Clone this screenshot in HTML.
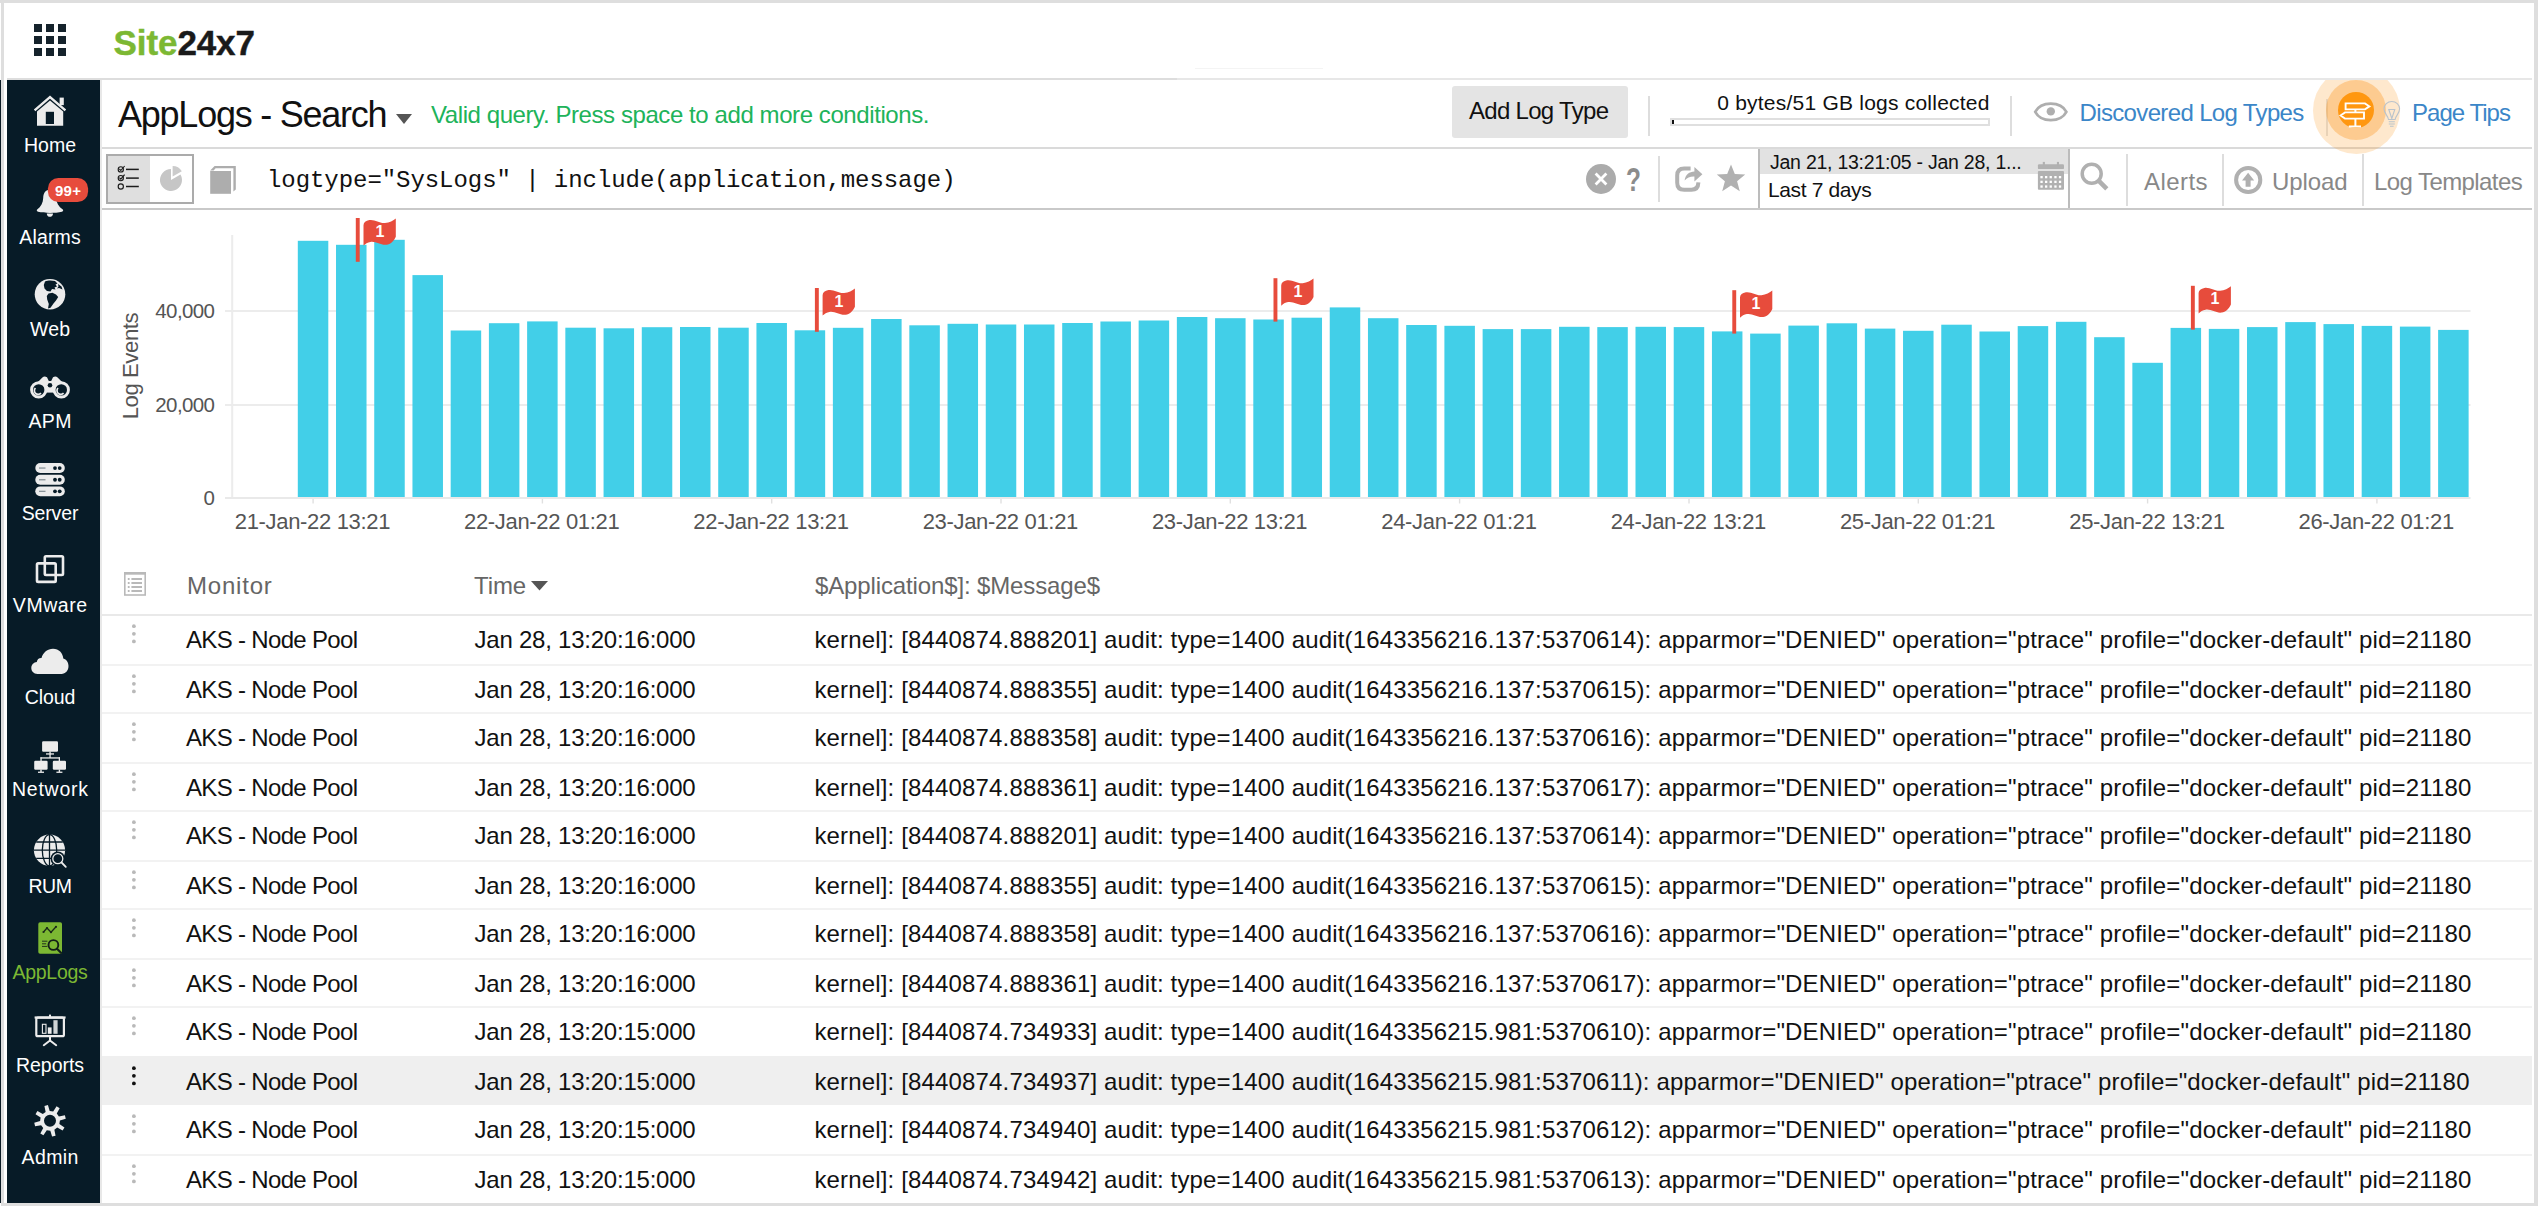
<!DOCTYPE html>
<html lang="en"><head><meta charset="utf-8"><title>AppLogs - Search</title>
<style>
*{box-sizing:border-box;margin:0;padding:0}
html,body{width:2538px;height:1210px;overflow:hidden;background:#fff}
body{position:relative;font-family:"Liberation Sans",sans-serif;color:#111}
.a{position:absolute}
.t{position:absolute;white-space:pre;line-height:1}
.sb{position:absolute;left:7px;top:80px;width:93px;height:1123px;background:#071b27}
.sl{position:absolute;left:0;width:86px;text-align:center;color:#fff;font-size:19.5px;line-height:1;white-space:pre}
.row{position:absolute;left:102px;width:2430px;height:49px}
.c{position:absolute;white-space:pre;line-height:1;font-size:24px;color:#111}
.vsep{position:absolute;width:2px;background:#ddd}
.xl{position:absolute;white-space:pre;line-height:1;font-size:22px;letter-spacing:-0.33px;color:#555;width:240px;text-align:center;top:511px}
.yl{position:absolute;white-space:pre;line-height:1;font-size:20.5px;color:#555;width:100px;text-align:right;left:114.4px}
</style></head>
<body>
<div class="a" style="left:0;top:0;width:2538px;height:3px;background:#dedede"></div>
<div class="a" style="left:1px;top:0;width:3px;height:1206px;background:#dedede"></div>
<div class="a" style="left:2534px;top:0;width:4px;height:1206px;background:#dedede"></div>
<div class="a" style="left:1px;top:1203px;width:2537px;height:3px;background:#dedede"></div>
<div class="a" style="left:0;top:80px;width:1px;height:1123px;background:#0d1c26"></div>
<div class="a" style="left:7px;top:78px;width:2525px;height:2px;background:#e7e7e7"></div><div class="a" style="left:7px;top:78px;width:1170px;height:2px;background:#dddddd"></div><div class="a" style="left:1195px;top:68px;width:128px;height:1px;background:#f4f4f4"></div>
<svg class="a" style="left:34px;top:24px" width="32" height="32" viewBox="0 0 32 32" fill="#16232c"><rect x="0" y="0" width="8" height="8"/><rect x="12" y="0" width="8" height="8"/><rect x="24" y="0" width="8" height="8"/><rect x="0" y="12" width="8" height="8"/><rect x="12" y="12" width="8" height="8"/><rect x="24" y="12" width="8" height="8"/><rect x="0" y="24" width="8" height="8"/><rect x="12" y="24" width="8" height="8"/><rect x="24" y="24" width="8" height="8"/></svg>
<div class="t" style="left:113.6px;top:25.2px;font-size:35px;font-weight:700;letter-spacing:-0.1px;color:#1a1a1a;-webkit-text-stroke:0.45px"><span style="color:#7cb833">Site</span>24x7</div>
<div class="sb">
<svg class="a" style="left:0;top:0" width="93" height="1123" viewBox="7 80 93 1123">
<g><path d="M34.6 110.4 L50 97 L65.4 110.4" fill="none" stroke="#ececec" stroke-width="2.4" stroke-linejoin="miter"/><rect x="59.6" y="97.6" width="4.2" height="7.5" fill="#ececec"/><path d="M37 111.6 L50 100.6 L63.2 111.6 V125.8 H37Z" fill="#ececec"/><rect x="45.8" y="111.8" width="8.2" height="12.2" fill="#071b27"/></g>
<g fill="#ececec"><path d="M49.6 189.8 C45 189.8 43.4 193.5 43.2 198 C43 203 41 206.5 37.2 209.6 C36.4 210.4 36.8 211.4 38 211.7 C45 213.3 55 213.3 62 211.7 C63.2 211.4 63.5 210.4 62.8 209.6 C58.6 206.5 56.4 203 56.2 198 C56 193.5 54.4 189.8 49.6 189.8Z"/><path d="M46.8 213.4 H53 C53 217.9 46.8 217.9 46.8 213.4Z"/></g>
<rect x="47.9" y="177.9" width="40.2" height="24.2" rx="10.5" fill="#e74c3c"/>
<g><circle cx="50" cy="294.2" r="15.3" fill="#ececec"/><path d="M45 281.5 C48 280 52 280.2 55 281 L57.5 283.5 L55.5 284.5 L57 286.5 L54.5 287.5 L55.5 289.5 L52 289 L50.5 291.5 L47 291 L44.5 288.5 L43.8 285 Z" fill="#071b27"/><path d="M58 284 L61.5 286.5 L62.5 289.5 L59 288 L57 288.5 L58.5 286.5Z" fill="#071b27"/><path d="M48.5 293.5 L52.5 292.8 L56 294.5 L58.2 297 L56 300.5 L53.5 303.5 L50.5 307.8 L48 308.6 L48.8 304 L47.2 299.5 L46.8 296Z" fill="#071b27"/></g>
<g><path d="M42.4 377.4 Q44.4 375.6 47 377.2 L48.8 381 H51.2 L53 377.2 Q55.6 375.6 57.6 377.4 L66.5 386.5 H33.5Z" fill="#ececec"/><circle cx="38.7" cy="389.9" r="8.6" fill="#ececec"/><circle cx="61.3" cy="389.9" r="8.6" fill="#ececec"/><rect x="45.5" y="383" width="9" height="9.6" fill="#ececec"/><circle cx="38.7" cy="389.9" r="5.7" fill="#071b27"/><circle cx="61.3" cy="389.9" r="5.7" fill="#071b27"/><circle cx="50" cy="385.2" r="2.3" fill="#071b27"/><path d="M35.4 388 A3.8 3.8 0 0 0 41 393.2" fill="none" stroke="#ececec" stroke-width="1.7"/><path d="M58 388 A3.8 3.8 0 0 0 63.6 393.2" fill="none" stroke="#ececec" stroke-width="1.7"/></g>
<rect x="35.3" y="463.1" width="29.5" height="9.9" rx="4.95" fill="#ececec"/><rect x="39" y="467.4" width="6.5" height="1.3" fill="#8a949a"/><circle cx="55" cy="468.05" r="1.9" fill="#071b27"/><circle cx="59.7" cy="468.05" r="1.9" fill="#071b27"/><rect x="35.3" y="474.8" width="29.5" height="9.9" rx="4.95" fill="#ececec"/><rect x="39" y="479.1" width="6.5" height="1.3" fill="#8a949a"/><circle cx="55" cy="479.75" r="1.9" fill="#071b27"/><circle cx="59.7" cy="479.75" r="1.9" fill="#071b27"/><rect x="35.3" y="486.4" width="29.5" height="9.9" rx="4.95" fill="#ececec"/><rect x="39" y="490.7" width="6.5" height="1.3" fill="#8a949a"/><circle cx="55" cy="491.35" r="1.9" fill="#071b27"/><circle cx="59.7" cy="491.35" r="1.9" fill="#071b27"/>
<g fill="none" stroke="#ececec" stroke-width="2.6"><rect x="44.8" y="556.2" width="18.2" height="18.8" rx="1.2"/><rect x="37" y="563.4" width="18.7" height="18.5" rx="1.2"/></g>
<path d="M37.5 673.9 C33.5 673.9 31.3 671 31.3 668 C31.3 664.6 33.8 662.3 36.8 662 C37 659.5 39 657.8 41.5 658 C43 652.5 47.5 648.7 53 648.7 C59 648.7 62.8 653 63.3 658.5 C66.5 659.3 68.5 662.3 68.5 666 C68.5 670.5 65.5 673.9 61.5 673.9Z" fill="#ececec"/>
<g fill="#ececec"><rect x="42.1" y="741.3" width="15.9" height="10.4" rx="1.2"/><rect x="34.2" y="760.7" width="13.4" height="9" rx="1.2"/><rect x="52.8" y="760.7" width="13.2" height="9" rx="1.2"/><rect x="46" y="753.3" width="8" height="1.3"/><rect x="49.4" y="751.5" width="1.3" height="6.5"/><rect x="40.4" y="757.3" width="19.6" height="1.3"/><rect x="40.4" y="757.3" width="1.3" height="4"/><rect x="58.7" y="757.3" width="1.3" height="4"/><rect x="40.3" y="769.5" width="1.4" height="2.5"/><rect x="38" y="771.6" width="6" height="1.3"/><rect x="58.7" y="769.5" width="1.4" height="2.5"/><rect x="56.4" y="771.6" width="6" height="1.3"/></g>
<g><circle cx="49.5" cy="850.2" r="15.6" fill="#ececec"/><g fill="none" stroke="#071b27" stroke-width="1.3"><ellipse cx="49.5" cy="850.2" rx="7.2" ry="15.6"/><path d="M49.5 834.6 V865.8 M33.9 850.2 H65.1 M36.2 842 H62.8 M36.2 858.4 H62.8"/></g><circle cx="57.8" cy="858.7" r="7.2" fill="#071b27"/><circle cx="57.8" cy="858.7" r="5" fill="#071b27" stroke="#ececec" stroke-width="1.3"/><path d="M61.6 862.5 L65.8 866.8" stroke="#ececec" stroke-width="1.8" stroke-linecap="round"/></g>
<g><rect x="38.3" y="922.3" width="23.7" height="31.4" rx="1.8" fill="#7cb833"/><path d="M43.5 932 L47 928 L51 932.2 L56 926.8" fill="none" stroke="#1b2a1a" stroke-width="1.3"/><circle cx="43.5" cy="932.0" r="1.1" fill="#1b2a1a"/><circle cx="47.0" cy="928.0" r="1.1" fill="#1b2a1a"/><circle cx="51.0" cy="932.2" r="1.1" fill="#1b2a1a"/><circle cx="56.0" cy="926.8" r="1.1" fill="#1b2a1a"/><path d="M42 941.2 H47.4 M42 943.8 H46.2 M42 946.4 H47.4" stroke="#22331c" stroke-width="1"/><circle cx="53.4" cy="945" r="4.9" fill="none" stroke="#132018" stroke-width="1.9"/><path d="M57 948.8 L61 952.8" stroke="#132018" stroke-width="2.2" stroke-linecap="round"/></g>
<g><rect x="36.3" y="1017.6" width="27.6" height="18.6" rx="1.5" fill="none" stroke="#ececec" stroke-width="2.2"/><rect x="34.6" y="1016.4" width="31" height="2.2" fill="#ececec"/><rect x="49" y="1014.6" width="2" height="2.4" fill="#ececec"/><rect x="42.4" y="1024.3" width="3.6" height="9" fill="none" stroke="#ececec" stroke-width="1.1"/><rect x="47.8" y="1027.4" width="3.8" height="6.4" fill="#ececec"/><rect x="53.4" y="1020.2" width="4.2" height="13.6" fill="#cfd4d6"/><path d="M50 1037 V1041 M50 1040.5 L43.8 1045.2 M50 1040.5 L56.2 1045.2" stroke="#ececec" stroke-width="2" fill="none" stroke-linecap="round"/></g>
<path d="M45.64 1111.91 L44.43 1105.91 L47.93 1105.04 L49.68 1110.91 L53.20 1111.43 L56.59 1106.33 L59.68 1108.19 L56.77 1113.58 L58.89 1116.44 L64.89 1115.23 L65.76 1118.73 L59.89 1120.48 L59.37 1124.00 L64.47 1127.39 L62.61 1130.48 L57.22 1127.57 L54.36 1129.69 L55.57 1135.69 L52.07 1136.56 L50.32 1130.69 L46.80 1130.17 L43.41 1135.27 L40.32 1133.41 L43.23 1128.02 L41.11 1125.16 L35.11 1126.37 L34.24 1122.87 L40.11 1121.12 L40.63 1117.60 L35.53 1114.21 L37.39 1111.12 L42.78 1114.03Z M44.00 1120.80 a6.00 6.00 0 1 0 12.00 0 a6.00 6.00 0 1 0 -12.00 0Z" fill="#ececec" fill-rule="evenodd"/>
</svg>
<div class="t" style="left:41px;top:102.5px;width:40.2px;text-align:center;color:#fff;font-size:15px;font-weight:700;letter-spacing:0.2px">99+</div>
<div class="sl" style="top:56.0px;letter-spacing:-0.03px;color:#fff;padding-left:0.00px">Home</div>
<div class="sl" style="top:147.7px;letter-spacing:0.17px;color:#fff;padding-left:0.17px">Alarms</div>
<div class="sl" style="top:239.6px;letter-spacing:0.12px;color:#fff;padding-left:0.12px">Web</div>
<div class="sl" style="top:331.8px;letter-spacing:0.48px;color:#fff;padding-left:0.48px">APM</div>
<div class="sl" style="top:423.6px;letter-spacing:-0.16px;color:#fff;padding-left:0.00px">Server</div>
<div class="sl" style="top:515.9px;letter-spacing:0.55px;color:#fff;padding-left:0.55px">VMware</div>
<div class="sl" style="top:607.7px;letter-spacing:-0.07px;color:#fff;padding-left:0.00px">Cloud</div>
<div class="sl" style="top:699.6px;letter-spacing:0.74px;color:#fff;padding-left:0.74px">Network</div>
<div class="sl" style="top:797.3px;letter-spacing:-0.47px;color:#fff;padding-left:0.00px">RUM</div>
<div class="sl" style="top:883.3px;letter-spacing:-0.30px;color:#7cb833;padding-left:0.00px">AppLogs</div>
<div class="sl" style="top:975.7px;letter-spacing:-0.04px;color:#fff;padding-left:0.00px">Reports</div>
<div class="sl" style="top:1067.5px;letter-spacing:0.38px;color:#fff;padding-left:0.38px">Admin</div>
</div>
<div class="a" style="left:100px;top:80px;width:2px;height:1123px;background:#e8e8e8"></div>
<div class="a" style="left:102px;top:147px;width:2430px;height:2px;background:#dadada"></div>
<div class="t" style="left:118.0px;top:97.4px;font-size:36px;color:#111;letter-spacing:-1.237px;">AppLogs - Search</div>
<svg class="a" style="left:396px;top:114px" width="16" height="10" viewBox="0 0 16 10"><path d="M0 0H16L8 10Z" fill="#555"/></svg>
<div class="t" style="left:431.0px;top:103.1px;font-size:24px;color:#20b35a;letter-spacing:-0.418px;">Valid query. Press space to add more conditions.</div>
<div class="a" style="left:1452px;top:86px;width:176px;height:52px;background:#e4e4e4;border-radius:3px"></div>
<div class="t" style="left:1469.0px;top:99.2px;font-size:24px;color:#111;letter-spacing:-0.699px;">Add Log Type</div>
<div class="vsep" style="left:1648px;top:96px;height:40px"></div>
<div class="t" style="left:1717.2px;top:92.1px;font-size:21px;color:#111;letter-spacing:0.225px;">0 bytes/51 GB logs collected</div>
<div class="a" style="left:1670px;top:118px;width:320px;height:8px;border:2px solid #dfdfdf;background:#fff"></div>
<div class="a" style="left:1672px;top:120px;width:2px;height:4px;background:#111"></div>
<div class="vsep" style="left:2010px;top:96px;height:40px"></div>
<svg class="a" style="left:2033px;top:100px" width="36" height="24" viewBox="0 0 36 24"><path d="M2.2 11.8 C8 0.8 27.6 0.8 33.4 11.8 C27.6 22.8 8 22.8 2.2 11.8Z" fill="none" stroke="#aeaeae" stroke-width="2.7"/><circle cx="17.8" cy="11.4" r="4.2" fill="#aeaeae"/></svg>
<div class="t" style="left:2079.5px;top:100.6px;font-size:24px;color:#3b86c8;letter-spacing:-0.642px;">Discovered Log Types</div>
<div class="vsep" style="left:2326px;top:99px;height:37px;background:#e4e4e4"></div>
<div class="a" style="left:2300px;top:80px;width:120px;height:90px;overflow:hidden"><div class="a" style="left:12.5px;top:-13.5px;width:87px;height:87px;border-radius:50%;background:rgba(252,146,20,0.21)"></div><div class="a" style="left:25.6px;top:-0.4px;width:60.8px;height:60.8px;border-radius:50%;background:rgba(252,146,20,0.33)"></div><div class="a" style="left:37.6px;top:11.6px;width:36.8px;height:36.8px;border-radius:50%;background:#ff9710"></div></div>
<svg class="a" style="left:2337.6px;top:91.6px" width="37" height="37" viewBox="0 0 37 37" fill="none" stroke="#fff" stroke-width="1.9" stroke-linejoin="miter"><path d="M7.6 11.4 H27 L31.4 14.4 L27 17.4 H7.6Z"/><path d="M26 20.4 H7 L2.6 23.5 L7 26.6 H26Z"/><path d="M17.4 17.4 V20.4 M17.4 26.6 V34 M10.8 34.4 H23" stroke-width="2"/></svg>
<svg class="a" style="left:2382px;top:100px" width="20" height="28" viewBox="0 0 20 28" fill="none" stroke="#b9c3cc" stroke-width="1.1"><path d="M6.5 19.5 C6 15.5 2 13.5 2 8.8 C2 4.5 5.5 1.5 9.8 1.5 C14 1.5 17.6 4.5 17.6 8.8 C17.6 13.5 13.6 15.5 13.1 19.5Z"/><path d="M6.8 21.8 H12.8 M6.8 24 H12.8 M8 26.2 H11.6"/><path d="M6.8 9.5 L9.8 18.5 L12.8 9.5 Z"/></svg>
<div class="t" style="left:2412.0px;top:100.6px;font-size:24px;color:#3b86c8;letter-spacing:-0.970px;">Page Tips</div>
<div class="a" style="left:102px;top:208px;width:2430px;height:2px;background:#c9c9c9"></div>
<div class="a" style="left:106px;top:154px;width:88px;height:50px;border:2px solid #ababab;background:#fff"><div class="a" style="left:0;top:0;width:42px;height:46px;background:#dfdfdf"></div></div>
<svg class="a" style="left:116px;top:164px" width="26" height="28" viewBox="116 164 26 28" fill="none" stroke="#1c1c1c"><circle cx="120.8" cy="169.4" r="2.6" stroke-width="1.15"/><path d="M126 169.4 H138.8" stroke-width="1.5"/><path d="M119.4 169.0 L120.8 170.5 L124.6 166.0" stroke-width="1.15"/><circle cx="120.8" cy="178.1" r="2.6" stroke-width="1.15"/><path d="M126 178.1 H138.8" stroke-width="1.5"/><path d="M119.4 177.7 L120.8 179.2 L124.6 174.7" stroke-width="1.15"/><circle cx="120.8" cy="186.5" r="2.6" stroke-width="1.15"/><path d="M126 186.5 H138.8" stroke-width="1.5"/></svg>
<svg class="a" style="left:158px;top:164px" width="26" height="28" viewBox="158 164 26 28"><path d="M171 169 A11 11 0 1 0 180.5 174.5 L171 180Z" fill="#c6c6c6"/><path d="M172.6 166 A10.6 10.6 0 0 1 181.8 171.3 L172.6 176.6Z" fill="#cbcbcb"/></svg>
<svg class="a" style="left:209px;top:165px" width="28" height="30" viewBox="209 165 28 30"><path d="M210.2 170.6 L214.6 166 H235.8 V189.6 L233.4 191.4 V168.3 H215.6 L213.6 170.6Z" fill="#adadad"/><rect x="210.2" y="171" width="20.8" height="22.8" fill="#adadad"/></svg>
<div class="t" style="left:267.0px;top:168.8px;font-size:24px;color:#111;letter-spacing:-0.059px;font-family:&quot;Liberation Mono&quot;,monospace;">logtype=&quot;SysLogs&quot; | include(application,message)</div>
<svg class="a" style="left:1586px;top:164px" width="30" height="30" viewBox="0 0 30 30"><circle cx="15" cy="15" r="15" fill="#ababab"/><path d="M9.6 9.6 L20.4 20.4 M20.4 9.6 L9.6 20.4" stroke="#fff" stroke-width="2.8"/></svg>
<div class="t" style="left:1626.4px;top:162.6px;font-size:33px;font-weight:700;color:#8c8c8c;transform:scaleX(0.74);transform-origin:0 0">?</div>
<div class="vsep" style="left:1658px;top:156px;height:46px"></div>
<svg class="a" style="left:1674px;top:164px" width="30" height="29" viewBox="1674 164 30 29" fill="none"><path d="M1690.6 168.4 H1684.2 Q1677.2 168.4 1677.2 175.4 V182.8 Q1677.2 189.8 1684.2 189.8 H1691.4 Q1698.2 189.8 1698.4 182.4" stroke="#b1b1b1" stroke-width="4"/><path d="M1684.6 180.6 C1685.4 174.6 1689.4 171.8 1694.4 171.6 V167 L1702.4 174.2 L1694.4 181.4 V176.6 C1690.4 176.4 1687.2 177.6 1684.6 180.6Z" fill="#b1b1b1"/></svg>
<svg class="a" style="left:1715px;top:163px" width="32" height="29" viewBox="0 0 32 29"><path d="M16 1.4 L19.8 11 L30.2 11.6 L22.1 18.2 L24.8 28.2 L16 22.6 L7.2 28.2 L9.9 18.2 L1.8 11.6 L12.2 11Z" fill="#b1b1b1"/></svg>
<div class="a" style="left:1758px;top:149px;width:312px;height:59px;border-left:2px solid #bcbcbc;border-right:2px solid #bcbcbc"></div>
<div class="a" style="left:1760px;top:149px;width:308px;height:24.5px;background:#e2e2e2"></div>
<div class="t" style="left:1770.0px;top:152.9px;font-size:19.5px;color:#111;letter-spacing:-0.245px;">Jan 21, 13:21:05 - Jan 28, 1...</div>
<div class="t" style="left:1768.0px;top:178.7px;font-size:21px;color:#111;letter-spacing:-0.373px;">Last 7 days</div>
<svg class="a" style="left:2037px;top:161px" width="28" height="30" viewBox="2037 161 28 30"><rect x="2037.9" y="164.3" width="26.1" height="4.8" rx="1.2" fill="#b1b1b1"/><rect x="2037.9" y="171" width="26.1" height="18.8" rx="1" fill="#b1b1b1"/><rect x="2042.8" y="161.9" width="2.1" height="3.4" fill="#b1b1b1"/><rect x="2056.9" y="161.9" width="2.1" height="3.4" fill="#b1b1b1"/><rect x="2040.4" y="176.0" width="2.3" height="2.3" fill="#fff"/><rect x="2045.0" y="176.0" width="2.3" height="2.3" fill="#fff"/><rect x="2049.6" y="176.0" width="2.3" height="2.3" fill="#fff"/><rect x="2054.3" y="176.0" width="2.3" height="2.3" fill="#fff"/><rect x="2058.9" y="176.0" width="2.3" height="2.3" fill="#fff"/><rect x="2040.4" y="180.7" width="2.3" height="2.3" fill="#fff"/><rect x="2045.0" y="180.7" width="2.3" height="2.3" fill="#fff"/><rect x="2049.6" y="180.7" width="2.3" height="2.3" fill="#fff"/><rect x="2054.3" y="180.7" width="2.3" height="2.3" fill="#fff"/><rect x="2058.9" y="180.7" width="2.3" height="2.3" fill="#fff"/><rect x="2040.4" y="185.4" width="2.3" height="2.3" fill="#fff"/><rect x="2045.0" y="185.4" width="2.3" height="2.3" fill="#fff"/><rect x="2049.6" y="185.4" width="2.3" height="2.3" fill="#fff"/><rect x="2054.3" y="185.4" width="2.3" height="2.3" fill="#fff"/><rect x="2058.9" y="185.4" width="2.3" height="2.3" fill="#fff"/></svg>
<svg class="a" style="left:2079px;top:161px" width="30" height="30" viewBox="2079 161 30 30" fill="none" stroke="#b0b0b0"><circle cx="2091.7" cy="173.8" r="9.5" stroke-width="3.5"/><path d="M2098.6 180.6 L2106.8 188.8" stroke-width="4.6"/></svg>
<div class="vsep" style="left:2126px;top:154px;height:52px"></div>
<div class="t" style="left:2144.0px;top:169.7px;font-size:24px;color:#888;letter-spacing:0.450px;">Alerts</div>
<div class="vsep" style="left:2222px;top:154px;height:52px"></div>
<svg class="a" style="left:2233px;top:165px" width="30" height="30" viewBox="2233 165 30 30"><circle cx="2248.2" cy="180" r="12.1" fill="none" stroke="#b0b0b0" stroke-width="4"/><path d="M2248.1 172.8 L2254.2 180.4 H2250.6 V186.8 H2245.6 V180.4 H2242Z" fill="#b0b0b0"/></svg>
<div class="t" style="left:2272.0px;top:169.7px;font-size:24px;color:#888;letter-spacing:-0.100px;">Upload</div>
<div class="vsep" style="left:2362px;top:154px;height:52px"></div>
<div class="t" style="left:2374.0px;top:169.7px;font-size:24px;color:#888;letter-spacing:-0.580px;">Log Templates</div>
<svg class="a" style="left:102px;top:210px" width="2430" height="330" viewBox="102 210 2430 330">
<g stroke="#ececec" stroke-width="2" fill="none"><path d="M225 311 H2470.5 M225 405 H2470.5"/><path d="M232.2 235 V498"/><path d="M225 498 H2470.5" stroke="#e9e9e9"/></g>
<g stroke="#e0e0e0" stroke-width="1.4"><path d="M313.1 499 V503.5"/><path d="M542.4 499 V503.5"/><path d="M771.7 499 V503.5"/><path d="M1001.0 499 V503.5"/><path d="M1230.3 499 V503.5"/><path d="M1459.6 499 V503.5"/><path d="M1689.0 499 V503.5"/><path d="M1918.3 499 V503.5"/><path d="M2147.6 499 V503.5"/><path d="M2376.9 499 V503.5"/></g>
<g fill="#42cfe8"><rect x="297.80" y="240.8" width="30.5" height="256.2"/><rect x="336.02" y="244.8" width="30.5" height="252.2"/><rect x="374.24" y="239.8" width="30.5" height="257.2"/><rect x="412.46" y="275.1" width="30.5" height="221.9"/><rect x="450.68" y="330.5" width="30.5" height="166.5"/><rect x="488.90" y="323.2" width="30.5" height="173.8"/><rect x="527.12" y="321.4" width="30.5" height="175.6"/><rect x="565.34" y="327.7" width="30.5" height="169.3"/><rect x="603.56" y="328.3" width="30.5" height="168.7"/><rect x="641.78" y="327.2" width="30.5" height="169.8"/><rect x="680.00" y="327.0" width="30.5" height="170.0"/><rect x="718.22" y="327.7" width="30.5" height="169.3"/><rect x="756.44" y="323.0" width="30.5" height="174.0"/><rect x="794.66" y="330.3" width="30.5" height="166.7"/><rect x="832.88" y="327.8" width="30.5" height="169.2"/><rect x="871.10" y="319.0" width="30.5" height="178.0"/><rect x="909.32" y="325.3" width="30.5" height="171.7"/><rect x="947.54" y="323.8" width="30.5" height="173.2"/><rect x="985.76" y="324.5" width="30.5" height="172.5"/><rect x="1023.98" y="324.5" width="30.5" height="172.5"/><rect x="1062.20" y="323.0" width="30.5" height="174.0"/><rect x="1100.42" y="321.5" width="30.5" height="175.5"/><rect x="1138.64" y="320.5" width="30.5" height="176.5"/><rect x="1176.86" y="317.0" width="30.5" height="180.0"/><rect x="1215.08" y="318.2" width="30.5" height="178.8"/><rect x="1253.30" y="319.5" width="30.5" height="177.5"/><rect x="1291.52" y="317.7" width="30.5" height="179.3"/><rect x="1329.74" y="307.4" width="30.5" height="189.6"/><rect x="1367.96" y="318.2" width="30.5" height="178.8"/><rect x="1406.18" y="325.0" width="30.5" height="172.0"/><rect x="1444.40" y="325.8" width="30.5" height="171.2"/><rect x="1482.62" y="329.1" width="30.5" height="167.9"/><rect x="1520.84" y="329.1" width="30.5" height="167.9"/><rect x="1559.06" y="326.8" width="30.5" height="170.2"/><rect x="1597.28" y="327.1" width="30.5" height="169.9"/><rect x="1635.50" y="326.8" width="30.5" height="170.2"/><rect x="1673.72" y="327.1" width="30.5" height="169.9"/><rect x="1711.94" y="331.4" width="30.5" height="165.6"/><rect x="1750.16" y="333.6" width="30.5" height="163.4"/><rect x="1788.38" y="325.6" width="30.5" height="171.4"/><rect x="1826.60" y="323.3" width="30.5" height="173.7"/><rect x="1864.82" y="328.6" width="30.5" height="168.4"/><rect x="1903.04" y="330.8" width="30.5" height="166.2"/><rect x="1941.26" y="324.7" width="30.5" height="172.3"/><rect x="1979.48" y="331.5" width="30.5" height="165.5"/><rect x="2017.70" y="326.1" width="30.5" height="170.9"/><rect x="2055.92" y="321.8" width="30.5" height="175.2"/><rect x="2094.14" y="337.2" width="30.5" height="159.8"/><rect x="2132.36" y="362.8" width="30.5" height="134.2"/><rect x="2170.58" y="327.9" width="30.5" height="169.1"/><rect x="2208.80" y="328.9" width="30.5" height="168.1"/><rect x="2247.02" y="327.1" width="30.5" height="169.9"/><rect x="2285.24" y="322.1" width="30.5" height="174.9"/><rect x="2323.46" y="324.1" width="30.5" height="172.9"/><rect x="2361.68" y="325.9" width="30.5" height="171.1"/><rect x="2399.90" y="326.6" width="30.5" height="170.4"/><rect x="2438.12" y="329.9" width="30.5" height="167.1"/></g>
<g transform="translate(355.8 218.0)" fill="#e74c3c"><rect x="0" y="0" width="3.9" height="43.8"/><path d="M7.7 7.2 C7.8 4.6 10 2.6 13.6 2.1 C19.5 1.3 23.5 5.6 29.2 5 C33.6 4.5 37.5 2.6 40 0.4 V18.8 C38.2 23 34.6 26.4 30.8 26.8 C24.5 27.5 20.5 23 14.6 23.9 C11.8 24.4 9.5 25.8 7.7 27.6Z"/></g>
<g transform="translate(814.9 288.0)" fill="#e74c3c"><rect x="0" y="0" width="3.9" height="43.8"/><path d="M7.7 7.2 C7.8 4.6 10 2.6 13.6 2.1 C19.5 1.3 23.5 5.6 29.2 5 C33.6 4.5 37.5 2.6 40 0.4 V18.8 C38.2 23 34.6 26.4 30.8 26.8 C24.5 27.5 20.5 23 14.6 23.9 C11.8 24.4 9.5 25.8 7.7 27.6Z"/></g>
<g transform="translate(1273.5 278.2)" fill="#e74c3c"><rect x="0" y="0" width="3.9" height="43.4"/><path d="M7.7 7.2 C7.8 4.6 10 2.6 13.6 2.1 C19.5 1.3 23.5 5.6 29.2 5 C33.6 4.5 37.5 2.6 40 0.4 V18.8 C38.2 23 34.6 26.4 30.8 26.8 C24.5 27.5 20.5 23 14.6 23.9 C11.8 24.4 9.5 25.8 7.7 27.6Z"/></g>
<g transform="translate(1732.3 290.2)" fill="#e74c3c"><rect x="0" y="0" width="3.9" height="43.4"/><path d="M7.7 7.2 C7.8 4.6 10 2.6 13.6 2.1 C19.5 1.3 23.5 5.6 29.2 5 C33.6 4.5 37.5 2.6 40 0.4 V18.8 C38.2 23 34.6 26.4 30.8 26.8 C24.5 27.5 20.5 23 14.6 23.9 C11.8 24.4 9.5 25.8 7.7 27.6Z"/></g>
<g transform="translate(2190.9 285.8)" fill="#e74c3c"><rect x="0" y="0" width="3.9" height="43.8"/><path d="M7.7 7.2 C7.8 4.6 10 2.6 13.6 2.1 C19.5 1.3 23.5 5.6 29.2 5 C33.6 4.5 37.5 2.6 40 0.4 V18.8 C38.2 23 34.6 26.4 30.8 26.8 C24.5 27.5 20.5 23 14.6 23.9 C11.8 24.4 9.5 25.8 7.7 27.6Z"/></g>
</svg>
<div class="t" style="left:370.8px;top:222.6px;font-size:32px;font-weight:700;color:#fff;transform:scale(0.5);transform-origin:0 0"> 1</div>
<div class="t" style="left:829.9px;top:292.6px;font-size:32px;font-weight:700;color:#fff;transform:scale(0.5);transform-origin:0 0"> 1</div>
<div class="t" style="left:1288.5px;top:282.8px;font-size:32px;font-weight:700;color:#fff;transform:scale(0.5);transform-origin:0 0"> 1</div>
<div class="t" style="left:1747.3px;top:294.8px;font-size:32px;font-weight:700;color:#fff;transform:scale(0.5);transform-origin:0 0"> 1</div>
<div class="t" style="left:2205.9px;top:290.4px;font-size:32px;font-weight:700;color:#fff;transform:scale(0.5);transform-origin:0 0"> 1</div>
<div class="yl" style="top:300.8px;letter-spacing:-0.6px">40,000</div>
<div class="yl" style="top:394.8px;letter-spacing:-0.6px">20,000</div>
<div class="yl" style="top:487.8px;letter-spacing:-0.6px">0</div>
<div class="t" style="left:71.3px;top:354.9px;width:120px;text-align:center;font-size:22.2px;color:#555;letter-spacing:-0.45px;transform:rotate(-90deg)">Log Events</div>
<div class="xl" style="left:192.4px">21-Jan-22 13:21</div>
<div class="xl" style="left:421.7px">22-Jan-22 01:21</div>
<div class="xl" style="left:651.0px">22-Jan-22 13:21</div>
<div class="xl" style="left:880.3px">23-Jan-22 01:21</div>
<div class="xl" style="left:1109.6px">23-Jan-22 13:21</div>
<div class="xl" style="left:1338.9px">24-Jan-22 01:21</div>
<div class="xl" style="left:1568.3px">24-Jan-22 13:21</div>
<div class="xl" style="left:1797.6px">25-Jan-22 01:21</div>
<div class="xl" style="left:2026.9px">25-Jan-22 13:21</div>
<div class="xl" style="left:2256.2px">26-Jan-22 01:21</div>
<svg class="a" style="left:124px;top:572px" width="22" height="24" viewBox="0 0 22 24" fill="none" stroke="#b9b9b9"><rect x="0.8" y="0.8" width="20.4" height="22.2" stroke-width="1.6"/><path d="M0.8 1.6 H21.2" stroke-width="2.2"/><g stroke="#a2a2a2" stroke-width="1.5"><path d="M7.4 7 H18 M7.4 11 H18 M7.4 15 H18 M7.4 19 H18"/><path d="M3.8 7 H5.6 M3.8 11 H5.6 M3.8 15 H5.6 M3.8 19 H5.6"/></g></svg>
<div class="c" style="left:187px;top:573.6px;color:#666;letter-spacing:0.8px">Monitor</div>
<div class="c" style="left:474px;top:573.6px;color:#666;letter-spacing:-0.11px">Time</div>
<svg class="a" style="left:531px;top:581px" width="17" height="10" viewBox="0 0 17 10"><path d="M0 0H17L8.5 9.6Z" fill="#555"/></svg>
<div class="c" style="left:815px;top:573.6px;color:#666;letter-spacing:-0.13px">$Application$]: $Message$</div>
<div class="a" style="left:102px;top:614px;width:2430px;height:2px;background:#e9e9e9"></div>
<svg class="a" style="left:130px;top:623px" width="8" height="22" viewBox="0 0 8 22" fill="#b9b9b9"><circle cx="3.9" cy="3.2" r="1.9"/><circle cx="3.9" cy="10.8" r="1.9"/><circle cx="3.9" cy="18.4" r="1.9"/></svg>
<div class="c" style="left:186px;top:627.7px;letter-spacing:-0.67px">AKS - Node Pool</div>
<div class="c" style="left:474.5px;top:627.7px;letter-spacing:-0.23px">Jan 28, 13:20:16:000</div>
<div class="c" style="left:814.4px;top:627.7px;letter-spacing:0.16px">kernel]: [8440874.888201] audit: type=1400 audit(1643356216.137:5370614): apparmor=&quot;DENIED&quot; operation=&quot;ptrace&quot; profile=&quot;docker-default&quot; pid=21180</div>
<div class="a" style="left:102px;top:664px;width:2430px;height:2px;background:#f2f2f2"></div>
<svg class="a" style="left:130px;top:673px" width="8" height="22" viewBox="0 0 8 22" fill="#b9b9b9"><circle cx="3.9" cy="3.2" r="1.9"/><circle cx="3.9" cy="10.8" r="1.9"/><circle cx="3.9" cy="18.4" r="1.9"/></svg>
<div class="c" style="left:186px;top:677.7px;letter-spacing:-0.67px">AKS - Node Pool</div>
<div class="c" style="left:474.5px;top:677.7px;letter-spacing:-0.23px">Jan 28, 13:20:16:000</div>
<div class="c" style="left:814.4px;top:677.7px;letter-spacing:0.16px">kernel]: [8440874.888355] audit: type=1400 audit(1643356216.137:5370615): apparmor=&quot;DENIED&quot; operation=&quot;ptrace&quot; profile=&quot;docker-default&quot; pid=21180</div>
<div class="a" style="left:102px;top:712px;width:2430px;height:2px;background:#f2f2f2"></div>
<svg class="a" style="left:130px;top:721px" width="8" height="22" viewBox="0 0 8 22" fill="#b9b9b9"><circle cx="3.9" cy="3.2" r="1.9"/><circle cx="3.9" cy="10.8" r="1.9"/><circle cx="3.9" cy="18.4" r="1.9"/></svg>
<div class="c" style="left:186px;top:725.7px;letter-spacing:-0.67px">AKS - Node Pool</div>
<div class="c" style="left:474.5px;top:725.7px;letter-spacing:-0.23px">Jan 28, 13:20:16:000</div>
<div class="c" style="left:814.4px;top:725.7px;letter-spacing:0.16px">kernel]: [8440874.888358] audit: type=1400 audit(1643356216.137:5370616): apparmor=&quot;DENIED&quot; operation=&quot;ptrace&quot; profile=&quot;docker-default&quot; pid=21180</div>
<div class="a" style="left:102px;top:762px;width:2430px;height:2px;background:#f2f2f2"></div>
<svg class="a" style="left:130px;top:771px" width="8" height="22" viewBox="0 0 8 22" fill="#b9b9b9"><circle cx="3.9" cy="3.2" r="1.9"/><circle cx="3.9" cy="10.8" r="1.9"/><circle cx="3.9" cy="18.4" r="1.9"/></svg>
<div class="c" style="left:186px;top:775.7px;letter-spacing:-0.67px">AKS - Node Pool</div>
<div class="c" style="left:474.5px;top:775.7px;letter-spacing:-0.23px">Jan 28, 13:20:16:000</div>
<div class="c" style="left:814.4px;top:775.7px;letter-spacing:0.16px">kernel]: [8440874.888361] audit: type=1400 audit(1643356216.137:5370617): apparmor=&quot;DENIED&quot; operation=&quot;ptrace&quot; profile=&quot;docker-default&quot; pid=21180</div>
<div class="a" style="left:102px;top:810px;width:2430px;height:2px;background:#f2f2f2"></div>
<svg class="a" style="left:130px;top:819px" width="8" height="22" viewBox="0 0 8 22" fill="#b9b9b9"><circle cx="3.9" cy="3.2" r="1.9"/><circle cx="3.9" cy="10.8" r="1.9"/><circle cx="3.9" cy="18.4" r="1.9"/></svg>
<div class="c" style="left:186px;top:823.7px;letter-spacing:-0.67px">AKS - Node Pool</div>
<div class="c" style="left:474.5px;top:823.7px;letter-spacing:-0.23px">Jan 28, 13:20:16:000</div>
<div class="c" style="left:814.4px;top:823.7px;letter-spacing:0.16px">kernel]: [8440874.888201] audit: type=1400 audit(1643356216.137:5370614): apparmor=&quot;DENIED&quot; operation=&quot;ptrace&quot; profile=&quot;docker-default&quot; pid=21180</div>
<div class="a" style="left:102px;top:860px;width:2430px;height:2px;background:#f2f2f2"></div>
<svg class="a" style="left:130px;top:869px" width="8" height="22" viewBox="0 0 8 22" fill="#b9b9b9"><circle cx="3.9" cy="3.2" r="1.9"/><circle cx="3.9" cy="10.8" r="1.9"/><circle cx="3.9" cy="18.4" r="1.9"/></svg>
<div class="c" style="left:186px;top:873.7px;letter-spacing:-0.67px">AKS - Node Pool</div>
<div class="c" style="left:474.5px;top:873.7px;letter-spacing:-0.23px">Jan 28, 13:20:16:000</div>
<div class="c" style="left:814.4px;top:873.7px;letter-spacing:0.16px">kernel]: [8440874.888355] audit: type=1400 audit(1643356216.137:5370615): apparmor=&quot;DENIED&quot; operation=&quot;ptrace&quot; profile=&quot;docker-default&quot; pid=21180</div>
<div class="a" style="left:102px;top:908px;width:2430px;height:2px;background:#f2f2f2"></div>
<svg class="a" style="left:130px;top:917px" width="8" height="22" viewBox="0 0 8 22" fill="#b9b9b9"><circle cx="3.9" cy="3.2" r="1.9"/><circle cx="3.9" cy="10.8" r="1.9"/><circle cx="3.9" cy="18.4" r="1.9"/></svg>
<div class="c" style="left:186px;top:921.7px;letter-spacing:-0.67px">AKS - Node Pool</div>
<div class="c" style="left:474.5px;top:921.7px;letter-spacing:-0.23px">Jan 28, 13:20:16:000</div>
<div class="c" style="left:814.4px;top:921.7px;letter-spacing:0.16px">kernel]: [8440874.888358] audit: type=1400 audit(1643356216.137:5370616): apparmor=&quot;DENIED&quot; operation=&quot;ptrace&quot; profile=&quot;docker-default&quot; pid=21180</div>
<div class="a" style="left:102px;top:958px;width:2430px;height:2px;background:#f2f2f2"></div>
<svg class="a" style="left:130px;top:967px" width="8" height="22" viewBox="0 0 8 22" fill="#b9b9b9"><circle cx="3.9" cy="3.2" r="1.9"/><circle cx="3.9" cy="10.8" r="1.9"/><circle cx="3.9" cy="18.4" r="1.9"/></svg>
<div class="c" style="left:186px;top:971.7px;letter-spacing:-0.67px">AKS - Node Pool</div>
<div class="c" style="left:474.5px;top:971.7px;letter-spacing:-0.23px">Jan 28, 13:20:16:000</div>
<div class="c" style="left:814.4px;top:971.7px;letter-spacing:0.16px">kernel]: [8440874.888361] audit: type=1400 audit(1643356216.137:5370617): apparmor=&quot;DENIED&quot; operation=&quot;ptrace&quot; profile=&quot;docker-default&quot; pid=21180</div>
<div class="a" style="left:102px;top:1006px;width:2430px;height:2px;background:#f2f2f2"></div>
<svg class="a" style="left:130px;top:1015px" width="8" height="22" viewBox="0 0 8 22" fill="#b9b9b9"><circle cx="3.9" cy="3.2" r="1.9"/><circle cx="3.9" cy="10.8" r="1.9"/><circle cx="3.9" cy="18.4" r="1.9"/></svg>
<div class="c" style="left:186px;top:1019.7px;letter-spacing:-0.67px">AKS - Node Pool</div>
<div class="c" style="left:474.5px;top:1019.7px;letter-spacing:-0.23px">Jan 28, 13:20:15:000</div>
<div class="c" style="left:814.4px;top:1019.7px;letter-spacing:0.16px">kernel]: [8440874.734933] audit: type=1400 audit(1643356215.981:5370610): apparmor=&quot;DENIED&quot; operation=&quot;ptrace&quot; profile=&quot;docker-default&quot; pid=21180</div>
<div class="a" style="left:102px;top:1056.3px;width:2430px;height:48.4px;background:#efefef"></div>
<svg class="a" style="left:130px;top:1065px" width="8" height="22" viewBox="0 0 8 22" fill="#111"><circle cx="3.9" cy="3.2" r="1.9"/><circle cx="3.9" cy="10.8" r="1.9"/><circle cx="3.9" cy="18.4" r="1.9"/></svg>
<div class="c" style="left:186px;top:1069.7px;letter-spacing:-0.67px">AKS - Node Pool</div>
<div class="c" style="left:474.5px;top:1069.7px;letter-spacing:-0.23px">Jan 28, 13:20:15:000</div>
<div class="c" style="left:814.4px;top:1069.7px;letter-spacing:0.16px">kernel]: [8440874.734937] audit: type=1400 audit(1643356215.981:5370611): apparmor=&quot;DENIED&quot; operation=&quot;ptrace&quot; profile=&quot;docker-default&quot; pid=21180</div>
<svg class="a" style="left:130px;top:1113px" width="8" height="22" viewBox="0 0 8 22" fill="#b9b9b9"><circle cx="3.9" cy="3.2" r="1.9"/><circle cx="3.9" cy="10.8" r="1.9"/><circle cx="3.9" cy="18.4" r="1.9"/></svg>
<div class="c" style="left:186px;top:1117.7px;letter-spacing:-0.67px">AKS - Node Pool</div>
<div class="c" style="left:474.5px;top:1117.7px;letter-spacing:-0.23px">Jan 28, 13:20:15:000</div>
<div class="c" style="left:814.4px;top:1117.7px;letter-spacing:0.16px">kernel]: [8440874.734940] audit: type=1400 audit(1643356215.981:5370612): apparmor=&quot;DENIED&quot; operation=&quot;ptrace&quot; profile=&quot;docker-default&quot; pid=21180</div>
<div class="a" style="left:102px;top:1154px;width:2430px;height:2px;background:#f2f2f2"></div>
<svg class="a" style="left:130px;top:1163px" width="8" height="22" viewBox="0 0 8 22" fill="#b9b9b9"><circle cx="3.9" cy="3.2" r="1.9"/><circle cx="3.9" cy="10.8" r="1.9"/><circle cx="3.9" cy="18.4" r="1.9"/></svg>
<div class="c" style="left:186px;top:1167.7px;letter-spacing:-0.67px">AKS - Node Pool</div>
<div class="c" style="left:474.5px;top:1167.7px;letter-spacing:-0.23px">Jan 28, 13:20:15:000</div>
<div class="c" style="left:814.4px;top:1167.7px;letter-spacing:0.16px">kernel]: [8440874.734942] audit: type=1400 audit(1643356215.981:5370613): apparmor=&quot;DENIED&quot; operation=&quot;ptrace&quot; profile=&quot;docker-default&quot; pid=21180</div>
</body></html>
